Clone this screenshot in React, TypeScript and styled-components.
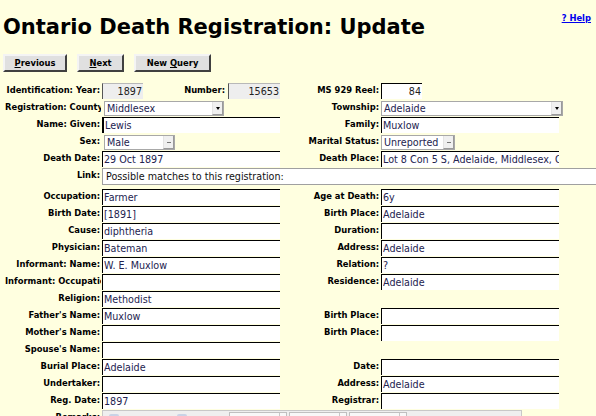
import React from "react"
import styled, { createGlobalStyle } from "styled-components"

const GlobalStyle = createGlobalStyle`
  html, body {
    margin: 0;
    padding: 0;
    background: #ffffe0;
  }
  body {
    width: 596px;
    height: 416px;
    overflow: hidden;
    font-family: "DejaVu Sans", Verdana, sans-serif;
  }
`

const Page = styled.div`
  padding: 0 5px 0 3px;
`

const Header = styled.div`
  display: flex;
  justify-content: space-between;
  align-items: flex-start;
  height: 41px;
  padding-top: 13px;
  box-sizing: border-box;
`

const Title = styled.h1`
  margin: 2px 0 0 0;
  font-size: 21px;
  font-weight: bold;
  line-height: normal;
  color: #000;
`

const HelpLink = styled.a`
  font-size: 8.4px;
  font-weight: bold;
  line-height: normal;
  color: #0000ee;
  text-decoration: underline;
`

const ButtonBar = styled.div`
  display: flex;
  gap: 10px;
  padding-top: 13px;
`

const NavButton = styled.button<{ $w: number }>`
  width: ${p => p.$w}px;
  height: 18px;
  padding: 0;
  box-sizing: border-box;
  background: #e0e0e0;
  border: 2px solid;
  border-color: #f4f4f4 #404040 #404040 #f4f4f4;
  font: bold 8.4px "DejaVu Sans", sans-serif;
  color: #000;
`

const Form = styled.div`
  margin-top: 11px;
  padding-left: 2px;
`

const Row = styled.div<{ $h?: number }>`
  display: grid;
  grid-template-columns: 96px 178px 99px 178px;
  column-gap: 1px;
  height: ${p => p.$h ?? 17}px;
  align-items: start;
`

const Label = styled.div`
  font: bold 8.4px "DejaVu Sans", sans-serif;
  line-height: 14px;
  color: #000;
  text-align: right;
  padding-right: 1px;
  white-space: nowrap;
  overflow: hidden;
`

const TextField = styled.input<{ $w?: number; $focus?: boolean }>`
  width: ${p => p.$w ?? 178}px;
  height: 16px;
  box-sizing: border-box;
  margin: 0;
  padding: 0 0 0 1px;
  border: 0;
  border-top: 1px solid #000;
  border-left: ${p => (p.$focus ? 2 : 1)}px solid #000;
  background: #fff;
  font: 9.6px "DejaVu Sans", sans-serif;
  color: #23234f;
  outline: none;
`

const ReadField = styled(TextField)<{ $grey?: boolean }>`
  text-align: right;
  padding: 0 1px 0 0;
  color: #222;
  background: ${p => (p.$grey ? "#eeeeee" : "#fff")};
  border-top-color: ${p => (p.$grey ? "#b8b8b8" : "#000")};
  border-left-color: ${p => (p.$grey ? "#555" : "#000")};
`

const IdGroup = styled.div`
  display: flex;
  align-items: start;
  width: 178px;
`

const InlineLabel = styled(Label)`
  flex: 1;
  padding-right: 3px;
`

const SelectBox = styled.div<{ $w: number; $inset?: boolean }>`
  display: flex;
  align-items: center;
  width: ${p => p.$w}px;
  height: 15px;
  box-sizing: border-box;
  margin: 1px 0 0 ${p => (p.$inset ? 2 : 0)}px;
  border: 1px solid #a8a8a8;
  background: #fff;
  font: 9.6px "DejaVu Sans", sans-serif;
  color: #23234f;
`

const SelectText = styled.span`
  flex: 1;
  padding-left: 2px;
  white-space: nowrap;
  overflow: hidden;
`

const SelectArrow = styled.span<{ $dim?: boolean }>`
  display: flex;
  align-items: center;
  justify-content: center;
  width: 11px;
  height: 13px;
  box-sizing: border-box;
  background: #f0f0f0;
  border-left: 1px solid #e4e4e4;
  border-right: 1px solid #9a9a9a;
  border-bottom: 1px solid #9a9a9a;

  &::after {
    content: "";
    width: 0;
    height: 0;
    border-left: ${p => (p.$dim ? "2.5px solid #777" : "2.5px solid transparent")};
    border-right: ${p => (p.$dim ? "2.5px solid #777" : "2.5px solid transparent")};
    border-top: ${p => (p.$dim ? "1px solid #777" : "3px solid #000")};
  }
`

const LinkBox = styled.div`
  grid-column: 2 / span 3;
  width: 520px;
  height: 17px;
  box-sizing: border-box;
  border: 1px solid #a0a0a0;
  background: #fff;
  padding: 2px 3px 0;
  font: 9.6px "DejaVu Sans", sans-serif;
  line-height: 12px;
  color: #111;
  white-space: nowrap;
`

const Toolbar = styled.div`
  grid-column: 2 / span 3;
  display: flex;
  align-items: flex-start;
  gap: 2px;
  width: 420px;
  height: 30px;
  box-sizing: border-box;
  border: 1px solid #c8c8c8;
  background: #efefef;
  padding: 1px 4px 0;
`

const ToolIcons = styled.div`
  display: flex;
  gap: 58px;
  width: 118px;
  padding: 2px 0 0 2px;
`

const ToolIcon = styled.span`
  width: 10px;
  height: 8px;
  border-radius: 2px;
  background: #c9d3e6;
`

const ToolSelect = styled.div`
  display: flex;
  width: 58px;
  height: 16px;
  box-sizing: border-box;
  border: 1px solid #c0c0c0;
  background: #f8f8f8;

  &::after {
    content: "";
    margin-left: auto;
    width: 6px;
    border-left: 1px solid #c8c8c8;
  }
`

type Field =
  | { kind: "text"; value: string; focus?: boolean }
  | { kind: "select"; value: string; w: number; dim?: boolean }
  | null

const Cell = ({ field, left }: { field: Field; left: boolean }) => {
  if (!field) return <div />
  if (field.kind === "select") {
    return (
      <SelectBox $w={field.w} $inset={left}>
        <SelectText>{field.value}</SelectText>
        <SelectArrow $dim={field.dim} />
      </SelectBox>
    )
  }
  return <TextField readOnly value={field.value} $focus={field.focus} />
}

const t = (value: string, focus?: boolean): Field => ({ kind: "text", value, focus })

const upper: [string, Field, string, Field][] = [
  ["Registration: County", { kind: "select", value: "Middlesex", w: 120 }, "Township:", { kind: "select", value: "Adelaide", w: 182 }],
  ["Name: Given:", t("Lewis", true), "Family:", t("Muxlow")],
  ["Sex:", { kind: "select", value: "Male", w: 71, dim: true }, "Marital Status:", { kind: "select", value: "Unreported", w: 74, dim: true }],
  ["Death Date:", t("29 Oct 1897"), "Death Place:", t("Lot 8 Con 5 S, Adelaide, Middlesex, Ontario")],
]

const lower: [string, Field, string, Field][] = [
  ["Occupation:", t("Farmer"), "Age at Death:", t("6y")],
  ["Birth Date:", t("[1891]"), "Birth Place:", t("Adelaide")],
  ["Cause:", t("diphtheria"), "Duration:", t("")],
  ["Physician:", t("Bateman"), "Address:", t("Adelaide")],
  ["Informant: Name:", t("W. E. Muxlow"), "Relation:", t("?")],
  ["Informant: Occupation:", t(""), "Residence:", t("Adelaide")],
  ["Religion:", t("Methodist"), "", null],
  ["Father's Name:", t("Muxlow"), "Birth Place:", t("")],
  ["Mother's Name:", t(""), "Birth Place:", t("")],
  ["Spouse's Name:", t(""), "", null],
  ["Burial Place:", t("Adelaide"), "Date:", t("")],
  ["Undertaker:", t(""), "Address:", t("Adelaide")],
  ["Reg. Date:", t("1897"), "Registrar:", t("")],
]

const FieldRow = ({ row }: { row: [string, Field, string, Field] }) => (
  <Row>
    <Label>{row[0]}</Label>
    <Cell field={row[1]} left />
    <Label>{row[2]}</Label>
    <Cell field={row[3]} left={false} />
  </Row>
)

export default function App() {
  return (
    <Page>
      <GlobalStyle />
      <Header>
        <Title>Ontario Death Registration: Update</Title>
        <HelpLink href="#">? Help</HelpLink>
      </Header>

      <ButtonBar>
        <NavButton $w={64}><u>P</u>revious</NavButton>
        <NavButton $w={47}><u>N</u>ext</NavButton>
        <NavButton $w={77}>New <u>Q</u>uery</NavButton>
      </ButtonBar>

      <Form>
        <Row>
          <Label>Identification: Year:</Label>
          <IdGroup>
            <ReadField readOnly value="1897" $w={41} $grey />
            <InlineLabel>Number:</InlineLabel>
            <ReadField readOnly value="15653" $w={52} $grey />
          </IdGroup>
          <Label>MS 929 Reel:</Label>
          <ReadField readOnly value="84" $w={41} />
        </Row>

        {upper.map(r => (
          <FieldRow key={r[0]} row={r} />
        ))}

        <Row $h={21}>
          <Label>Link:</Label>
          <LinkBox>Possible matches to this registration:</LinkBox>
        </Row>

        {lower.map(r => (
          <FieldRow key={r[0]} row={r} />
        ))}

        <Row $h={30}>
          <Label>Remarks:</Label>
          <Toolbar>
            <ToolIcons>
              <ToolIcon />
              <ToolIcon />
            </ToolIcons>
            <ToolSelect />
            <ToolSelect />
            <ToolSelect />
          </Toolbar>
        </Row>
      </Form>
    </Page>
  )
}
